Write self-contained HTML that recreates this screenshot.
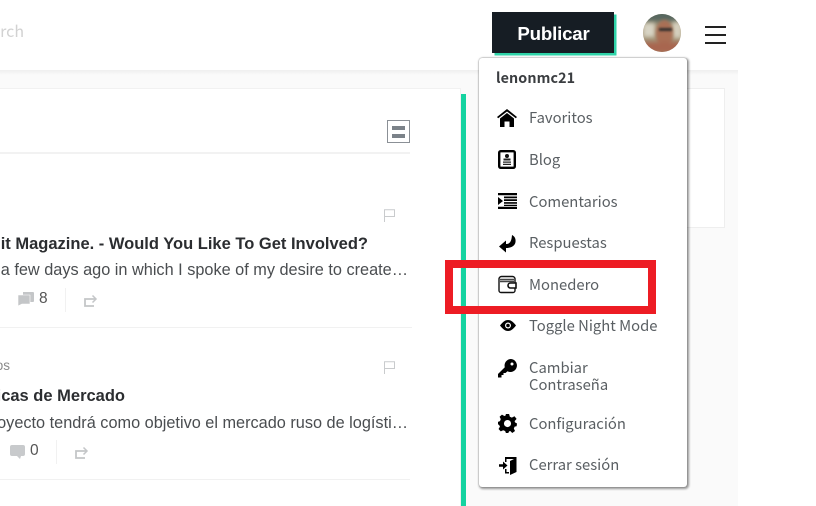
<!DOCTYPE html>
<html><head><meta charset="utf-8"><style>
*{box-sizing:border-box;margin:0;padding:0}
html,body{width:816px;height:506px;overflow:hidden;background:#fff}
body{position:relative;font-family:"Liberation Sans",sans-serif}
.a{position:absolute}
.t{position:absolute;white-space:nowrap}
.m{position:absolute;left:529px;font:14.8px/17px "Noto Sans CJK JP","Liberation Sans",sans-serif;color:#5a5f63;white-space:nowrap}
svg{position:absolute;overflow:visible}
.h{font-size:16.5px;font-weight:bold;color:#2b2d30;line-height:20px}
.p{font-size:16.3px;color:#4a4d50;line-height:20px}
</style></head><body>
<div class="a" style="left:0;top:70px;width:738px;height:436px;background:#fafafa"></div>
<div class="a" style="left:0;top:70px;width:738px;height:5px;background:linear-gradient(#efefef,#fafafa)"></div>
<div class="a" style="left:-2px;top:88px;width:463px;height:420px;background:#fff;border:1px solid #f1f1f1"></div>
<div class="a" style="left:461px;top:94px;width:5px;height:412px;background:#14d3a0"></div>
<div class="a" style="left:600px;top:88px;width:125px;height:140px;background:#fff;border:1px solid #eee"></div>
<div class="t" style="left:-27px;top:20px;font:16px/20px 'Noto Sans CJK JP',sans-serif;color:#d2d2d2">Search</div>

<div class="a" style="left:492px;top:12px;width:122px;height:41px;background:#161d24;box-shadow:2.500px 2.500px 0 #2fd3a8"></div>
<div class="t" style="left:492px;top:23px;width:123px;text-align:center;color:#fff;font-size:18.700px;font-weight:bold;line-height:21px;letter-spacing:-.2px">Publicar</div>
<div class="a" style="left:643px;top:14px;width:38px;height:38px;border-radius:50%;overflow:hidden;background:#a39478">
<div class="a" style="left:-4px;top:-6px;width:46px;height:14px;background:#56675f;filter:blur(3px)"></div>
<div class="a" style="left:0;top:9px;width:12px;height:14px;background:#d8d4c4;filter:blur(2px)"></div>
<div class="a" style="left:29px;top:8px;width:10px;height:16px;background:#d5d0be;filter:blur(2px)"></div>
<div class="a" style="left:13px;top:6px;width:17px;height:28px;border-radius:50%;background:#a96f55;filter:blur(1.500px)"></div>
<div class="a" style="left:16px;top:14px;width:13px;height:3px;background:#33302e;filter:blur(1px)"></div>
<div class="a" style="left:-2px;top:28px;width:42px;height:11px;background:#a8664f;filter:blur(2px)"></div>
</div>
<div class="a" style="left:705px;top:26px;width:21px;height:2px;background:#222"></div>
<div class="a" style="left:705px;top:34px;width:21px;height:2px;background:#222"></div>
<div class="a" style="left:705px;top:42px;width:21px;height:2px;background:#222"></div>

<div class="a" style="left:-2px;top:152px;width:412px;height:1.500px;background:#f2f2f2"></div>
<div class="a" style="left:387px;top:120px;width:23px;height:23px;border:1px solid #8b9096;background:#fff"></div>
<div class="a" style="left:392px;top:126px;width:13px;height:4px;background:#7b8289"></div>
<div class="a" style="left:392px;top:134px;width:13px;height:4px;background:#7b8289"></div>

<svg style="left:384px;top:209px" width="11" height="13" viewBox="0 0 11 13" fill="none" stroke="#c9cbcd"><path d="M.5 13V.8H10.500V7.500H.5"/></svg>
<div class="t h" style="left:-114px;top:234px;width:482px;text-align:right">it Magazine. - Would You Like To Get Involved?</div>
<div class="t p" style="left:-100px;top:260px;width:508px;text-align:right">a few days ago in which I spoke of my desire to create…</div>
<svg style="left:18px;top:292px" width="16" height="14" viewBox="0 0 16 14" fill="#c4c6c8"><path d="M5 0H15a1 1 0 0 1 1 1V9a1 1 0 0 1-1 1H5z"/><path d="M0 3H12V12H4L0 14z" stroke="#fff" stroke-width=".6"/></svg>
<div class="t" style="left:39px;top:290px;font-size:15.500px;line-height:18px;color:#555">8</div>
<div class="a" style="left:65px;top:288px;width:1px;height:24px;background:#f1f1f1"></div>
<svg style="left:84px;top:295px" width="13" height="12" viewBox="0 0 13 12" fill="none" stroke="#c4c6c8" stroke-width="1.800"><path d="M11 4H1V11H10"/><path d="M8.500 .5L12 4 8.500 7.500" stroke-width="1.500"/></svg>
<div class="a" style="left:-2px;top:327px;width:414px;height:1px;background:#f1f1f1"></div>

<div class="t" style="left:-20px;top:358px;width:30px;text-align:right;font-size:13.500px;line-height:16px;color:#8a8a8a">os</div>
<svg style="left:384px;top:361px" width="11" height="13" viewBox="0 0 11 13" fill="none" stroke="#c9cbcd"><path d="M.5 13V.8H10.500V7.500H.5"/></svg>
<div class="t h" style="left:-30px;top:386px;width:155px;text-align:right">icas de Mercado</div>
<div class="t p" style="left:-100px;top:413px;width:508px;text-align:right">oyecto tendrá como objetivo el mercado ruso de logísti…</div>
<svg style="left:10px;top:445px" width="15" height="14" viewBox="0 0 15 14" fill="#c8cacc"><path d="M2 0H13a2 2 0 0 1 2 2V9a2 2 0 0 1-2 2H11L10 14 7 11H2a2 2 0 0 1-2-2V2a2 2 0 0 1 2-2z"/></svg>
<div class="t" style="left:30px;top:442px;font-size:15.500px;line-height:18px;color:#555">0</div>
<div class="a" style="left:56px;top:440px;width:1px;height:24px;background:#f1f1f1"></div>
<svg style="left:75px;top:447px" width="13" height="12" viewBox="0 0 13 12" fill="none" stroke="#c4c6c8" stroke-width="1.800"><path d="M11 4H1V11H10"/><path d="M8.500 .5L12 4 8.500 7.500" stroke-width="1.500"/></svg>
<div class="a" style="left:-2px;top:479px;width:412px;height:1px;background:#f1f1f1"></div>

<div class="a" style="left:479px;top:58px;width:208px;height:429px;background:#fff;border-radius:3px;box-shadow:0 0 1px 0 rgba(0,0,0,.4),1px 1px 2px 1px rgba(0,0,0,.4)"></div>
<div class="t" style="left:496px;top:69px;font:bold 14.300px/18px 'Noto Sans CJK JP',sans-serif;color:#3a3d40;letter-spacing:.1px">lenonmc21</div>

<svg style="left:497px;top:109px" width="20" height="18" viewBox="0 0 20 18" fill="#000"><path d="M10 0L20 8 18.800 9.300 10 2.500 1.200 9.300 0 8z"/><path d="M10 4L17 9.500V18H12.500V12.500H7.500V18H3V9.500z"/></svg>
<div class="m" style="top:109px">Favoritos</div>

<svg style="left:498px;top:150px" width="18" height="19" viewBox="0 0 18 19"><rect x="1.200" y="1.200" width="15.600" height="16.600" rx="1.500" fill="#fff" stroke="#000" stroke-width="2.400"/><circle cx="9" cy="6" r="2" fill="#111"/><path d="M5.500 8.500H12.500V10.500H5.500zM5 11.500H13V12.700H5zM5 13.800H13V15H5z" fill="#222"/></svg>
<div class="m" style="top:151px">Blog</div>

<svg style="left:498px;top:193px" width="19" height="16" viewBox="0 0 19 16" fill="#000"><path d="M0 0H19V2.200H0zM0 13.800H19V16H0zM6 3.500H19V5.200H6zM6 6.300H19V8H6zM6 9.100H19V10.800H6zM6 11.800H19V13H6z"/><path d="M0 4L5 8 0 12z"/></svg>
<div class="m" style="top:193px">Comentarios</div>

<svg style="left:499px;top:235px" width="17" height="18" viewBox="0 0 17 18" fill="#000"><path d="M0 11.500L7 5.500V9C10.500 9 12.500 7 13 0 15 1 17 3 16.500 7 16 11 12 13 7 13V17.500z"/></svg>
<div class="m" style="top:234px">Respuestas</div>

<svg style="left:498px;top:275px" width="19" height="19" viewBox="0 0 19 19" fill="none" stroke="#111" stroke-width="1.400"><path d="M1 4V15.500A2 2 0 0 0 3 17.500H15A2 2 0 0 0 17 15.500V13"/><path d="M1 4A2.500 2.500 0 0 1 3.500 1.500H14.500A2.500 2.500 0 0 1 17 4V8"/><path d="M2 4.500H16M2 6.500H16" stroke="#444"/><path d="M18 8H12.500A2.500 2.500 0 0 0 12.500 13H18z" fill="#fff" stroke-width="1.600"/></svg>
<div class="m" style="top:276px">Monedero</div>

<svg style="left:500px;top:320px" width="16" height="11" viewBox="0 0 16 11"><path d="M0 5.500C3 1.500 5.500 0 8 0S13 1.500 16 5.500C13 9.500 10.500 11 8 11S3 9.500 0 5.500z" fill="#000"/><circle cx="8" cy="5.500" r="3" fill="#fff"/><circle cx="8" cy="5.500" r="1.800" fill="#000"/></svg>
<div class="m" style="top:317px">Toggle Night Mode</div>

<svg style="left:498px;top:359px" width="19" height="19" viewBox="0 0 19 19" fill="#000"><path d="M12.500 0A6.500 6.500 0 1 1 9.500 12.300L7.500 14H5.500V16H3.500V18.500H0V15L6.800 8.200A6.500 6.500 0 0 1 12.500 0z"/><circle cx="14" cy="5" r="1.500" fill="#fff"/></svg>
<div class="m" style="top:359px">Cambiar</div>
<div class="m" style="top:376px">Contraseña</div>

<svg style="left:498px;top:414px" width="19" height="19" viewBox="0 0 24 24" fill="#000"><path fill-rule="evenodd" d="M10 0H14L15 3.500 17.500 4.600 20.800 2.800 23.500 6.200 21 9 21.500 10.500 24 12 23.500 15.500 21 16 20 18.500 21.500 21.500 18 24 15.500 21.500 14 22 13 24H10L9 21.500 6.500 20.500 3.500 22 .7 19 2.500 16 1.500 14 0 13V10L2.500 9 3.500 6.500 2 3.500 5 .8 8 2.500 9.500 2zM12 7.500A4.500 4.500 0 1 0 12 16.500 4.500 4.500 0 0 0 12 7.500z"/></svg>
<div class="m" style="top:415px">Configuración</div>

<svg style="left:499px;top:456px" width="18" height="19" viewBox="0 0 18 19" fill="#000"><path d="M6 1H17.500V16L11 19V5L15 3H7.500V6H6z"/><path d="M6 13H7.500V16H10V17.500H6z"/><path d="M0 8.200H4V5.500L8.500 9.500 4 13.500V10.800H0z"/></svg>
<div class="m" style="top:456px">Cerrar sesión</div>

<div class="a" style="left:445px;top:260px;width:211px;height:54px;border:8.500px solid #ed1c24"></div>
</body></html>
